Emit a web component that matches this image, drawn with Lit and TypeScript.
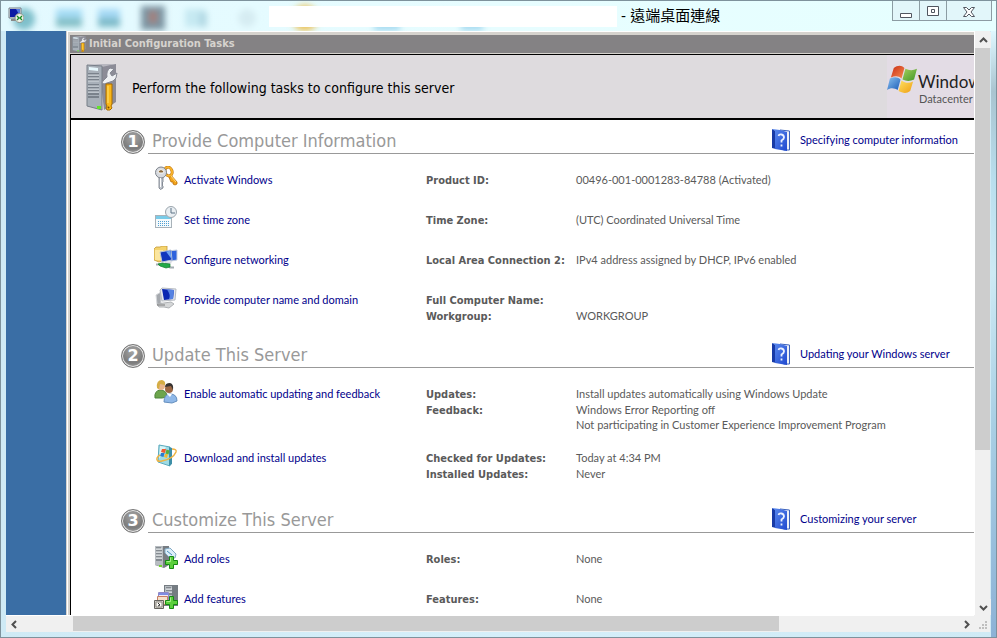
import { LitElement, html, css, svg, type TemplateResult } from "lit";
import { customElement, property } from "lit/decorators.js";

interface Detail {
  label: string;
  values: string[];
}

interface Task {
  icon: string;
  title: string;
  details: Detail[];
  tall?: boolean;
}

interface Section {
  title: string;
  help: string;
  tasks: Task[];
}

const sections: Section[] = [
  {
    title: "Provide Computer Information",
    help: "Specifying computer information",
    tasks: [
      { icon: "keys", title: "Activate Windows", details: [{ label: "Product ID:", values: ["00496-001-0001283-84788 (Activated)"] }] },
      { icon: "clock", title: "Set time zone", details: [{ label: "Time Zone:", values: ["(UTC) Coordinated Universal Time"] }] },
      { icon: "network", title: "Configure networking", details: [{ label: "Local Area Connection 2:", values: ["IPv4 address assigned by DHCP, IPv6 enabled"] }] },
      {
        icon: "computer",
        title: "Provide computer name and domain",
        details: [
          { label: "Full Computer Name:", values: [] },
          { label: "Workgroup:", values: ["WORKGROUP"] },
        ],
      },
    ],
  },
  {
    title: "Update This Server",
    help: "Updating your Windows server",
    tasks: [
      {
        icon: "people",
        title: "Enable automatic updating and feedback",
        details: [
          { label: "Updates:", values: ["Install updates automatically using Windows Update"] },
          { label: "Feedback:", values: ["Windows Error Reporting off", "Not participating in Customer Experience Improvement Program"] },
        ],
      },
      {
        icon: "update",
        title: "Download and install updates",
        tall: true,
        details: [
          { label: "Checked for Updates:", values: ["Today at 4:34 PM"] },
          { label: "Installed Updates:", values: ["Never"] },
        ],
      },
    ],
  },
  {
    title: "Customize This Server",
    help: "Customizing your server",
    tasks: [
      { icon: "roles", title: "Add roles", details: [{ label: "Roles:", values: ["None"] }] },
      { icon: "features", title: "Add features", details: [{ label: "Features:", values: ["None"] }] },
    ],
  },
];

const flag = svg`
  <path d="M4 3C8 0 12 0 15 3L12 14C9 11 5 11 1 13Z" fill="url(#fr)"/>
  <path d="M16 4C20 6 24 6 28 4L25 15C21 17 17 17 13 15Z" fill="url(#fg)"/>
  <path d="M0 14C4 12 8 12 11 15L8 26C5 24 1 23-3 26Z" fill="url(#fb)"/>
  <path d="M12 16C16 19 20 19 24 17L21 27C17 30 13 29 9 27Z" fill="url(#fy)"/>`;

const plus = svg`<path d="M15.500 11.500h4v4h4v4h-4v4h-4v-4h-4v-4h4z" fill="#5bd03c" stroke="#168a14"/><path d="M16.500 12.500v4h-4" fill="none" stroke="#a6f08a"/>`;

const icons: Record<string, TemplateResult> = {
  keys: svg`
    <path d="M14 9l2-1 7 8v2l-2 1-2-1v-2l-2 0z" fill="#f3a51c" stroke="#b96c08" stroke-width=".8"/>
    <ellipse cx="14.500" cy="5.500" rx="3.500" ry="4.500" transform="rotate(-20 14.500 5.500)" fill="#fff" stroke="#c67a10" stroke-width="3"/>
    <ellipse cx="14.500" cy="5.500" rx="3.500" ry="4.500" transform="rotate(-20 14.500 5.500)" fill="none" stroke="#f9b52c" stroke-width="1.800"/>
    <path d="M17 10l5 6" stroke="#ffd978"/>
    <path d="M5 11v11l1.500 1.500L9 22v-2l-1-1 1-1-1-1 1-1v-5z" fill="#c0c5cd" stroke="#6f7680" stroke-width=".8"/>
    <circle cx="7" cy="6.500" r="5.500" fill="#d7dadf" stroke="#7d838c"/>
    <path d="M4 5q3-3 6 0l-1 2H5z" fill="#8c6a3b" stroke="#f7f7f7"/>
    <path d="M6.500 12v9" stroke="#fff"/>`,
  clock: svg`
    <rect x="1.500" y="9.500" width="16" height="12" fill="#f5fafc" stroke="#a8b2b9"/>
    <path d="M2 10h15v3H2z" fill="#79cbe8"/>
    <path d="M4 15.500h12M4 17.500h12M4 19.500h12" stroke="#4f9fd2" stroke-dasharray="1 1"/>
    <circle cx="17" cy="6" r="5.500" fill="#e9eef2" stroke="#9ba5ad"/>
    <path d="M17 2v5h4" fill="none" stroke="#5d7385"/>`,
  network: svg`
    <path d="M0 3l2-2h4l2-1h5v13l-8 3-5-2z" fill="#f4d36d" stroke="#c49a38" stroke-width=".8"/>
    <path d="M1 4h8v10H1z" fill="#fbe69f"/>
    <path d="M14 5l9-1v10l-6 1z" fill="#2e62dd" stroke="#c5cede"/>
    <path d="M6 6l11-2 1 10-10 2z" fill="#1237bd" stroke="#b9c5d7"/>
    <path d="M12 5.500l4.500-.7 1 8.200z" fill="#6ea2f3"/>
    <path d="M11 16l7-1-1 3-6 0z" fill="#d8dbe1"/>
    <path d="M2 18.500h5q7 0 9 3h4" fill="none" stroke="#a4adb2" stroke-width="2"/>
    <path d="M4 18l4-1 8 1 0 3-4 1-6-2z" fill="#22a947" stroke="#117c2c" stroke-width=".7"/>`,
  computer: svg`
    <path d="M2 9l5-3v13l-4-1z" fill="#a5a9ae" stroke="#d5d7da"/>
    <path d="M3 18l14-2 3 2-5 4-5-1-5 0z" fill="#d5d7d8" stroke="#aeb1b4"/>
    <path d="M6 4l2-2 14 1-1 11-13 1z" fill="#e4e8ed" stroke="#b5bac1"/>
    <path d="M8 3l12 1-1 9-9 1z" fill="#0927b2"/>
    <path d="M13 3.500l7 .5-1 9-4 0q2-4-2-9.500z" fill="#5582e2"/>
    <path d="M3 19h8" stroke="#777"/>`,
  people: svg`
    <path d="M1 18q-1-7 5-8 7 0 7 7l-5 1z" fill="#6da54d" stroke="#4f853b"/>
    <circle cx="7" cy="6" r="4" fill="#e8b58b"/>
    <path d="M3 8q-1-8 5-8 4 1 3 5l-5-1-1 5z" fill="#d5ad45"/>
    <path d="M10 22q0-8 6-8 7 0 7 7l-5 2z" fill="#8fb8e8" stroke="#658fbe"/>
    <circle cx="15" cy="9" r="4" fill="#9c6743"/>
    <path d="M11 7q0-4 5-4 4 1 3 7l-2-4z" fill="#373331"/>
    <path d="M13 14l3 3 2-3" fill="#fff"/>`,
  update: svg`
    <path d="M5 1l11 2v19L4 18z" fill="#9edbe5" stroke="#5caabd"/>
    <path d="M15 3l3 1v16l-3 2z" fill="#3e8fa7"/>
    <path d="M6 2l6 1-7 12z" fill="#d8f5f7"/>
    <path d="M8 5l4 0-1 4-4-1z" fill="#ef5931"/><path d="M12.500 5.500l3 1-1 4-3-1z" fill="#58ad3e"/>
    <path d="M7 9l3.500 0-1 4-3.500-1z" fill="#287bd0"/><path d="M11 10l3 0-1 4-3-1z" fill="#f2ba30"/>
    <path d="M18 5q5 0 4 3-3 7-14 9-6 1-5-3 1-2 3-3" fill="none" stroke="#efb341" stroke-width="1.500"/>`,
  roles: svg`
    <path d="M1 1h14v19l-5 3-9-3z" fill="#777c82"/>
    <path d="M1 1h8v21l-8-2z" fill="#b7bcc1"/>
    <path d="M2 3h5M2 6h6M2 9h6M2 12h6M2 15h6" stroke="#535a61"/>
    <path d="M2 4h6M2 7h6M2 10h6M2 13h6" stroke="#edf0f2"/>
    <path d="M11 4l5-1 6 6-1 4-6-1-4-4z" fill="#dceefa" stroke="#84abc5"/>
    <path d="M13 6l5 4" stroke="#498fbb"/><path d="M5 20h3v2H5z" fill="#6ed529"/>${plus}`,
  features: svg`
    <path d="M10 0h14v21H10z" fill="#757c82"/><path d="M11 1h7v16h-7z" fill="#b7bdc2"/>
    <path d="M12 3h5M12 6h6M12 9h6" stroke="#4e555c"/><path d="M12 4h6M12 7h6" stroke="#eef1f3"/>
    <path d="M4.500 7.500h10v9h-10z" fill="#f2e9f5" stroke="#8f88c7"/><path d="M5 8h9v2H5z" fill="#7f8de2"/>
    <path d="M3.500 11.500h10v8h-10z" fill="#f6e1ca" stroke="#c77d65"/>
    <path d="M.5 15.500h9v8h-9z" fill="#d5d2cb" stroke="#65635f"/>
    <path d="M2 17h6v5H2z" fill="#faf9f5" stroke="#8b8880"/><path d="M4 18l2 2-2 1" fill="none" stroke="#333"/>${plus}`,
};

@customElement("task-row")
class TaskRow extends LitElement {
  @property({ attribute: false }) task!: Task;

  static styles = css`
    :host { display: block; }
    .row {
      display: grid;
      grid-template-columns: 24px 236px 1fr;
      column-gap: 6px;
      align-items: start;
      min-height: 40px;
      box-sizing: border-box;
      padding: 6px 0 7px 83px;
      white-space: nowrap;
    }
    .tall { padding-bottom: 14px; }
    .icon { display: block; width: 24px; height: 24px; }
    .link {
      justify-self: start;
      margin-top: 6px;
      font-size: 11px;
      line-height: 16px;
      color: #00008b;
      text-decoration: none;
    }
    .details { margin: 6px 0 0; font-size: 11px; color: #5a5a5a; }
    .pair { display: grid; grid-template-columns: 144px 1fr; column-gap: 6px; min-height: 16px; }
    .label { font: bold 11px/18px "DejaVu Sans Condensed", "DejaVu Sans", sans-serif; font-stretch: condensed; height: 16px; }
    .value { margin: 0; }
    .line { line-height: 13px; }
    .line:first-child { line-height: 16px; }
  `;

  render() {
    const t = this.task;
    return html`<div class="row ${t.tall ? "tall" : ""}">
      <svg class="icon" viewBox="0 0 24 24" aria-hidden="true">${icons[t.icon]}</svg>
      <a class="link" href="#${t.icon}">${t.title}</a>
      <dl class="details">
        ${t.details.map(
          (d) => html`<div class="pair">
            <dt class="label">${d.label}</dt>
            <dd class="value">${d.values.map((v) => html`<div class="line">${v}</div>`)}</dd>
          </div>`
        )}
      </dl>
    </div>`;
  }
}

@customElement("task-section")
class TaskSection extends LitElement {
  @property({ attribute: false }) section!: Section;
  @property({ type: Number }) number = 1;

  static styles = css`
    :host { display: block; margin-bottom: 9px; }
    .heading { display: flex; gap: 3px; padding-left: 50px; margin-bottom: 6px; }
    .badge {
      display: grid;
      place-items: center;
      box-sizing: border-box;
      width: 24px;
      height: 24px;
      margin-top: 4px;
      border: 1px solid #777;
      border-radius: 50%;
      background: radial-gradient(circle at 50% 30%, #a5a5a5, #7c7c7c 60%, #bdbdbd);
      box-shadow: inset 0 0 0 1px #e6e6e6;
      color: #fff;
      font: bold 16px/20px "DejaVu Sans", sans-serif;
    }
    .bar {
      flex: 1;
      display: grid;
      grid-template-columns: 1fr 202px;
      align-items: center;
      height: 27px;
      padding-left: 4px;
      border-bottom: 1px solid #999;
      white-space: nowrap;
    }
    .title {
      margin: 0;
      padding-top: 2px;
      color: #999;
      font: 18px/24px "DejaVu Sans Condensed", "DejaVu Sans", sans-serif;
      font-stretch: condensed;
    }
    .help {
      display: flex;
      align-items: center;
      gap: 10px;
      justify-self: start;
      font-size: 11px;
      line-height: 24px;
      color: #00008b;
      text-decoration: none;
    }
    .book { display: block; width: 18px; height: 22px; }
  `;

  render() {
    const s = this.section;
    return html`
      <div class="heading">
        <span class="badge">${this.number}</span>
        <div class="bar">
          <h2 class="title">${s.title}</h2>
          <a class="help" href="#help-${this.number}">
            <svg class="book" viewBox="0 0 18 22" aria-hidden="true">
              <defs><linearGradient id="cover" x2="1" y2="1"><stop stop-color="#5d8df0"/><stop offset="1" stop-color="#2049cf"/></linearGradient></defs>
              <path d="M8 1l9.500 1v19l-6 0z" fill="#eef1f8" stroke="#3c62bc"/>
              <path d="M0 0l4 2v18l-4-1z" fill="#1739a5"/>
              <path d="M0 0l8 1 7 2v19L3 20V2z" fill="url(#cover)"/>
              <path d="M2 2v17" stroke="#1a3ca8"/>
              <path d="M6.500 7q.5-2 3-1.500t2.500 3q0 1.500-2.500 3v2M9.500 15.500v2" fill="none" stroke="#e9f0ff" stroke-width="1.800"/>
            </svg>
            <span>${s.help}</span>
          </a>
        </div>
      </div>
      ${s.tasks.map((t) => html`<task-row .task=${t}></task-row>`)}
    `;
  }
}

@customElement("app-root")
class AppRoot extends LitElement {
  static styles = css`
    :host { display: block; font-family: Lato, "Liberation Sans", sans-serif; }
    .window {
      display: flex;
      flex-direction: column;
      box-sizing: border-box;
      height: 100vh;
      overflow: hidden;
      border: 1px solid #7e929c;
      background: linear-gradient(90deg, #cfeaf5, #d5effa 50%, #cfeaf5);
    }
    .titlebar {
      position: relative;
      flex: none;
      display: flex;
      align-items: flex-start;
      height: 30px;
      background: linear-gradient(90deg, #e3f9ff, #e7fdff 50%, #e6ffff);
    }
    .backdrop { position: absolute; left: 0; top: 0; width: 500px; height: 30px; }
    .app-icon { position: relative; width: 16px; height: 16px; margin: 6px 0 0 7px; }
    .address { position: relative; flex: 0 1 348px; height: 21px; margin: 5px 0 0 245px; background: #fff; }
    .caption {
      position: relative;
      flex: 1;
      margin: 0 0 0 4px;
      font: 15px/30px "Liberation Sans", "Noto Sans CJK TC", sans-serif;
      color: #000;
      white-space: nowrap;
    }
    .controls { display: flex; margin-right: 4px; border: 1px solid #8c9ca3; border-top: 0; }
    .control {
      display: grid;
      place-items: center;
      width: 27px;
      height: 19px;
      padding: 2px 0 0;
      border: 0;
      border-right: 1px solid #8c9ca3;
      background: #e2f6fa;
    }
    .control:last-child { width: 44px; border-right: 0; }
    .frame {
      flex: 1;
      min-height: 0;
      display: flex;
      padding: 0 6px 5px 5px;
      background: linear-gradient(#dff8ff, #a9c4d0 10%, #b9dfee 25%, #cdeaf4 40%, #a8cfe4 65%, #8cb2d6) right / 5px 100% no-repeat;
    }
    .client { flex: 1; min-width: 0; display: grid; grid-template: 1fr 17px / 1fr 16px; background: #f0f0f0; }
    .remote { display: flex; min-width: 0; min-height: 0; overflow: hidden; background: #3a6ea5; padding-left: 60px; }
    .dialog {
      flex: 1;
      min-width: 0;
      display: flex;
      flex-direction: column;
      border-left: 1px solid #d6d3ce;
      background: #d6d3ce;
      box-shadow: inset 1px 1px #fff;
      padding: 4px 0 0 3px;
    }
    .dialog-title {
      flex: none;
      display: flex;
      align-items: center;
      gap: 2px;
      height: 18px;
      padding-left: 2px;
      margin-bottom: 1px;
      background: #848284;
      color: #d6d3ce;
      font: bold 11px/18px "DejaVu Sans Condensed", "DejaVu Sans", sans-serif;
      font-stretch: condensed;
      white-space: nowrap;
    }
    .content { flex: 1; min-height: 0; overflow: hidden; border-left: 1px solid #000; background: #fff; }
    .banner {
      display: flex;
      align-items: center;
      box-sizing: border-box;
      height: 66px;
      border-top: 1px solid #000;
      border-bottom: 2px solid #000;
      background: #dedbde;
    }
    .banner-icon { flex: none; width: 32px; height: 48px; margin: 0 14px 0 15px; }
    .lead {
      flex: 1;
      margin: 0;
      padding-top: 2px;
      font: 14px/20px "DejaVu Sans Condensed", "DejaVu Sans", sans-serif;
      font-stretch: condensed;
      white-space: nowrap;
    }
    .brand {
      flex: none;
      display: flex;
      gap: 1px;
      width: 87px;
      height: 63px;
      overflow: hidden;
      background: #e3dce5;
      color: #222;
    }
    .flag { flex: none; width: 30px; height: 28px; margin: 10px 0 0; }
    .names { padding-top: 16px; white-space: nowrap; }
    .product { font-size: 17px; line-height: 21px; }
    .edition { font-size: 11px; line-height: 14px; padding-left: 1px; color: #555; }
    .sections { padding-top: 6px; }
    .vscroll, .hscroll { display: flex; background: #f0f0f0; }
    .vscroll { flex-direction: column; border-left: 1px solid #fff; padding-top: 1px; }
    .hscroll { border-top: 1px solid #fff; }
    .arrow { flex: none; display: grid; place-items: center; width: 16px; height: 16px; padding: 0; border: 0; background: #f0f0f0; }
    .vtrack, .htrack { flex: 1; display: flex; }
    .vtrack { flex-direction: column; }
    .vthumb { height: 73%; width: 15px; background: #cdcdcd; }
    .hthumb { width: 706px; max-width: 76%; margin-left: 51px; height: 15px; background: #cdcdcd; }
    .grip { align-self: end; justify-self: end; width: 12px; height: 12px; }
  `;

  private server(cls: string, w: number, h: number) {
    return html`<svg class=${cls} width=${w} height=${h} viewBox="0 0 32 48" preserveAspectRatio="none" aria-hidden="true">
      <path d="M13 3l17-2v38l-12 8z" fill="#8c8c97"/>
      <path d="M1 2l13-1h15l-13 3z" fill="#b7b7bf"/>
      <path d="M1 2l15 1v44L1 43z" fill="#a8b0b9" stroke="#777e88"/>
      <path d="M3 4l9 1v3l-9-1z" fill="#e7f8fd"/>
      <path d="M2 11h11M2 14h11M2 17h11M2 22h11M2 25h11M2 28h11M2 31h11M2 34h11" stroke="#4c545e"/>
      <path d="M2 12h11M2 15h11M2 18h11M2 23h11M2 26h11M2 29h11" stroke="#d4dae0"/>
      <path d="M11 43h4v3h-4z" fill="#64e32b"/>
      <path d="M17 18l4-4q-1-6 3-9l4 1-4 4 2 3 5-3q0 6-4 8l-6 2-3 1-2-1z" fill="#eef0f3" stroke="#858893"/>
      <path d="M20 21h6v20l-1 2 1 2-2 2h-3l-1-2 1-2-1-2z" fill="#f9b719" stroke="#a86b00"/>
      <path d="M22 23v17" stroke="#ffe275"/>
      <circle cx="22.500" cy="44.500" r="1" fill="#7a4d00"/>
    </svg>`;
  }

  private arrow(label: string, d: string) {
    return html`<button class="arrow" aria-label=${label}>
      <svg width="9" height="9" viewBox="0 0 9 9"><path d=${d} fill="none" stroke="#505050" stroke-width="2"/></svg>
    </button>`;
  }

  render() {
    return html`<div class="window">
      <header class="titlebar">
        <svg class="backdrop" viewBox="0 0 500 30" aria-hidden="true">
          <defs><filter id="soft" x="-50%" y="-50%" width="200%" height="200%"><feGaussianBlur stdDeviation="3"/></filter></defs>
          <g filter="url(#soft)">
            <circle cx="23" cy="18" r="11" fill="#7fc0cb"/>
            <path d="M55 8h26v9H55z" fill="#a5dcf5"/><path d="M55 17h26v9H55z" fill="#84bfc6"/>
            <path d="M97 8h22v9H97z" fill="#a5d9f5"/><path d="M97 17h22v9H97z" fill="#7dbac8"/>
            <path d="M140 5h24v24h-24z" fill="#7b95a3"/><path d="M148 10h8v12h-8z" fill="#a57f78"/>
            <path d="M184 8h20v18h-20z" fill="#c6e9f2"/><path d="M198 11h8v15h-8z" fill="#b2d9e4"/>
            <circle cx="246" cy="17" r="9" fill="#d6ecf2"/>
            <circle cx="304" cy="17" r="13" fill="#edc45b"/>
            <path d="M373 22h26v7h-26zM460 22h22v7h-22z" fill="#9cd5ee"/>
          </g>
        </svg>
        <svg class="app-icon" viewBox="0 0 16 16" aria-hidden="true">
          <path d="M1 1h12v10H1z" fill="#dfe4e9" stroke="#777f88"/><path d="M2 2h10v8H2z" fill="#0c1aa5"/>
          <path d="M8 2h4v7z" fill="#537bdf"/><path d="M3 13h6" stroke="#888" stroke-width="2"/>
          <circle cx="11.500" cy="11" r="4.500" fill="#eef3ea" stroke="#8b928a"/>
          <path d="M9 9l2 2-2 2M14 9l-2 2 2 2" fill="none" stroke="#168b23" stroke-width="1.300"/>
        </svg>
        <div class="address"></div>
        <h1 class="caption">- 遠端桌面連線</h1>
        <div class="controls">
          <button class="control" aria-label="Minimize"><svg width="13" height="15" viewBox="0 0 13 15"><path d="M.5 9.500h11v4H.5z" fill="#fff" stroke="#50555f"/></svg></button>
          <button class="control" aria-label="Maximize"><svg width="13" height="13" viewBox="0 0 13 13"><path d="M.5 1.500h11v9H.5zM4.500 4.500h3v3h-3z" fill="#fff" stroke="#50555f"/></svg></button>
          <button class="control" aria-label="Close"><svg width="12" height="12" viewBox="0 0 12 12"><path d="M.5 1.500h3L6 4l2.500-2.500h3L8 6l3.500 4.500h-3L6 8l-2.500 2.500h-3L4 6z" fill="#fff" stroke="#50555f"/></svg></button>
        </div>
      </header>
      <div class="frame">
        <div class="client">
          <div class="remote">
            <div class="dialog">
              <div class="dialog-title">${this.server("small", 15, 16)}<span>Initial Configuration Tasks</span></div>
              <main class="content">
                <div class="banner">
                  ${this.server("banner-icon", 32, 48)}
                  <p class="lead">Perform the following tasks to configure this server</p>
                  <div class="brand">
                    <svg class="flag" viewBox="-3 0 31 29" aria-hidden="true">
                      <defs>
                        <linearGradient id="fr" x2="1" y2="1"><stop stop-color="#c92c14"/><stop offset="1" stop-color="#f78d50"/></linearGradient>
                        <linearGradient id="fg" x2="1" y2="1"><stop stop-color="#a5cf5d"/><stop offset="1" stop-color="#3f9626"/></linearGradient>
                        <linearGradient id="fb" x2="1" y2="1"><stop stop-color="#8bc2ef"/><stop offset="1" stop-color="#1a5cb8"/></linearGradient>
                        <linearGradient id="fy" x2="1" y2="1"><stop stop-color="#ffe263"/><stop offset="1" stop-color="#ef9e13"/></linearGradient>
                      </defs>
                      ${flag}
                    </svg>
                    <div class="names">
                      <div class="product">Window</div>
                      <div class="edition">Datacenter</div>
                    </div>
                  </div>
                </div>
                <div class="sections">
                  ${sections.map((s, i) => html`<task-section .section=${s} .number=${i + 1}></task-section>`)}
                </div>
              </main>
            </div>
          </div>
          <div class="vscroll">
            ${this.arrow("Scroll up", "M1 6l3.500-3.500L8 6")}
            <div class="vtrack"><div class="vthumb"></div></div>
            ${this.arrow("Scroll down", "M1 3l3.500 3.500L8 3")}
          </div>
          <div class="hscroll">
            ${this.arrow("Scroll left", "M6 1L2.500 4.500 6 8")}
            <div class="htrack"><div class="hthumb"></div></div>
            ${this.arrow("Scroll right", "M3 1l3.500 3.500L3 8")}
          </div>
          <svg class="grip" viewBox="0 0 12 12" aria-hidden="true">
            <path d="M7 1h2v2H7zM4 4h2v2H4zM7 4h2v2H7zM1 7h2v2H1zM4 7h2v2H4zM7 7h2v2H7z" fill="#bfbfbf"/>
          </svg>
        </div>
      </div>
    </div>`;
  }
}
